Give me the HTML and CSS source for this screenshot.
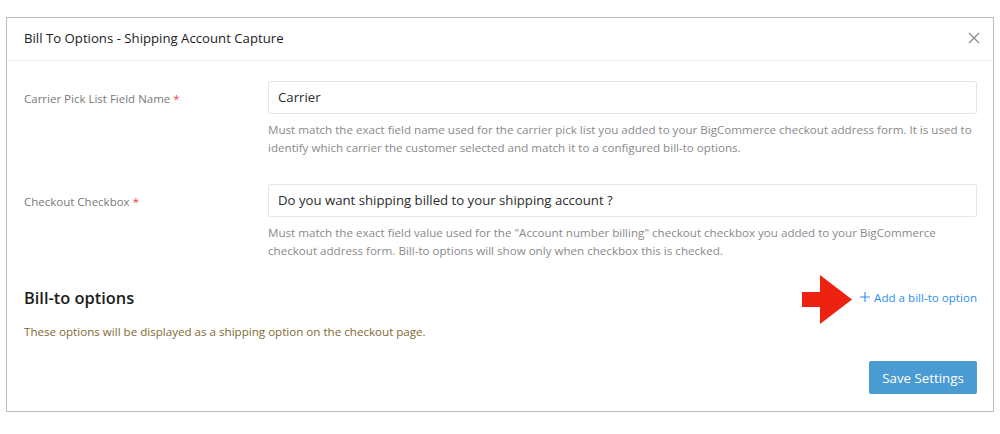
FILE: index.html
```html
<!DOCTYPE html>
<html lang="en">
<head>
<meta charset="utf-8">
<title>Bill To Options</title>
<link rel="stylesheet" href="styles.css">
</head>
<body>
<div class="modal">
  <header class="modal-header">
    <h1 class="modal-title">Bill To Options - Shipping Account Capture</h1>
    <svg class="close" width="12" height="12" viewBox="0 0 12 12"><path d="M1 1 11 11M11 1 1 11" stroke="#8a8a8a" stroke-width="1.200" fill="none"/></svg>
  </header>
  <div class="modal-body">
    <div class="field">
      <label class="field-label">Carrier Pick List Field Name <span class="req">*</span></label>
      <div class="field-main">
        <div class="input">Carrier</div>
        <p class="help">Must match the exact field name used for the carrier pick list you added to your BigCommerce checkout address form. It is used to identify which carrier the customer selected and match it to a configured bill-to options.</p>
      </div>
    </div>
    <div class="field">
      <label class="field-label">Checkout Checkbox <span class="req">*</span></label>
      <div class="field-main">
        <div class="input">Do you want shipping billed to your shipping account ?</div>
        <p class="help">Must match the exact field value used for the "Account number billing" checkout checkbox you added to your BigCommerce checkout address form. Bill-to options will show only when checkbox this is checked.</p>
      </div>
    </div>
    <div class="options-head">
      <h2 class="options-title">Bill-to options</h2>
      <div class="add-wrap">
        <svg class="arrow" width="50" height="49" viewBox="0 0 50 49"><path d="M0 17H18V0L50 24.500 18 49V32H0Z" fill="#ee2210"/></svg>
        <a class="add-link"><svg class="plus" width="10" height="10" viewBox="0 0 10 10"><path d="M5 0V10M0 5H10" stroke="#2e8ef5" stroke-width="1.100" fill="none"/></svg>Add a bill-to option</a>
      </div>
    </div>
    <p class="note">These options will be displayed as a shipping option on the checkout page.</p>
    <div class="actions"><button class="save">Save Settings</button></div>
  </div>
</div>
</body>
</html>
```
FILE: styles.css
```css
* { box-sizing: border-box; }
html, body { margin: 0; padding: 0; background: #fff; }
body { padding: 17px 6px 0; font-family: "Open Sans", sans-serif; height: 434px; overflow: hidden; }
.modal { width: 988px; height: 395px; border: 1px solid #bdbdbd; background: #fff; }
.modal-header { height: 43px; border-bottom: 1px solid #efefef; display: flex; align-items: center; justify-content: space-between; padding: 0 13px 2px 17px; }
.modal-title { margin: 0; font-size: 13.200px; font-weight: 400; color: #1c1c1c; }
.close { display: block; }
.modal-body { padding: 20px 16px 0 17px; }
.field { display: flex; height: 102.500px; }
.field-label { width: 244px; flex: none; font-size: 11.500px; color: #7a7a7a; padding-top: 10px; line-height: 16px; }
.req { color: #f0413c; }
.field-main { flex: 1; }
.input { height: 33px; border: 1px solid #e6e6e6; border-radius: 2px; padding: 0 9px; font-size: 13.200px; line-height: 31px; color: #2b2b2b; }
.help { margin: 7px 0 0; font-size: 11.600px; line-height: 18px; color: #8a8a8a; }
.options-head { display: flex; justify-content: space-between; align-items: center; height: 32px; margin-top: -5px; }
.options-title { margin: 0; font-size: 16.400px; font-weight: 600; color: #1c1c1c; }
.add-wrap { position: relative; }
.arrow { position: absolute; left: -58px; top: -15px; }
.add-link { display: flex; align-items: center; gap: 4px; font-size: 11.600px; color: #2e8ef5; }
.plus { display: block; }
.note { margin: 10px 0 0; font-size: 11.600px; line-height: 18px; color: #7f6a33; }
.actions { display: flex; justify-content: flex-end; margin-top: 20px; }
.save { width: 108px; height: 33px; border: 0; border-radius: 2px; background: #4a9bd1; color: #fff; font-family: inherit; font-size: 13.300px; }
```
